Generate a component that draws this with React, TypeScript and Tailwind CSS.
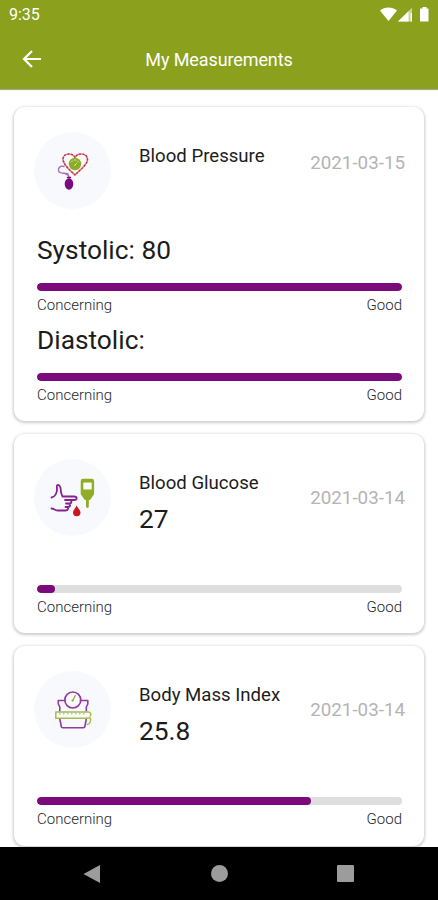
import type { ReactNode } from 'react'

interface MeterProps {
  percent: number
}

interface MeasurementCardProps {
  icon: ReactNode
  title: string
  value?: string
  date: string
  dateClass: string
  className: string
  children: ReactNode
}

function BloodPressureIcon() {
  return (
    <svg className="h-[90px] w-[90px]" viewBox="-2 0 90 90" fill="none" strokeLinecap="round" strokeLinejoin="round">
      <path d="M45 49C40 44 33 39 33 33C33 30 35.500 28 39 28C42 28 44 29.500 45 31.500C46 29.500 48 28 51 28C55 28 57.500 30 57.500 34C57 39 50 44 45 49Z" stroke="#d38a9c" strokeWidth="1.700" />
      <path d="M45 49C40 44 33 39 33 33C33 30 35.500 28 39 28C42 28 44 29.500 45 31.500C46 29.500 48 28 51 28C55 28 57.500 30 57.500 34C57 39 50 44 45 49Z" stroke="#cf3038" strokeWidth="1.300" strokeDasharray="1 2.500" />
      <circle cx="45" cy="38" r="6.200" fill="#8aad24" />
      <path d="M41.500 36L42.500 35M44.500 34H45.500M47.500 35L48.500 36M44.500 39.500L46.500 37.500" stroke="#e2ecc0" strokeWidth="1" />
      <path d="M38 48C34 46.500 29 48.500 28.500 44.500C28 41 31 39.500 34 40.500M36 48.300C38.500 48.300 39 49.500 39 52" stroke="#a86bb5" strokeWidth="1.400" />
      <ellipse cx="39" cy="58" rx="4.300" ry="5.800" fill="#7b0a82" />
      <path d="M37.500 51.500H40.500" stroke="#7b0a82" strokeWidth="1.500" />
    </svg>
  )
}

function BloodGlucoseIcon() {
  return (
    <svg className="h-[90px] w-[90px]" viewBox="-2 2 90 90" fill="none" strokeLinecap="round" strokeLinejoin="round">
      <path d="M21.500 46.500C25 46 27 42 27 38.500C27 35.500 26 34 28.500 34C30.500 35 31 38 31 41.500L32.500 45.500H44C47.500 45.500 47.500 49 44 49H35.500M35 49H39.500C42 49 42 52.500 39.500 52.500H36M38 52.500C41 53 40.500 56 38 56H35.500M37 56C39 57 38 59.500 35.500 59.500H27.500C25 59.500 24 57.500 21.500 57.500" stroke="#872391" strokeWidth="1.800" />
      <path d="M51.900 30.200C51.900 29.500 52.400 29 53.100 29H61.700C62.400 29 62.900 29.500 62.900 30.200V42.700L59.400 47.700H55.400L51.900 42.700Z" fill="#92ad25" stroke="#92ad25" strokeWidth="2.400" />
      <rect x="53.300" y="31.500" width="8.400" height="7" rx="0.800" fill="#fbfcf5" />
      <path d="M57.400 47V55.500" stroke="#92ad25" strokeWidth="2.800" />
      <path d="M46.500 54.500C48 57.500 50.500 59 50.500 61.800C50.500 66.500 43 66.500 43 61.800C43 59 45.500 57.500 46.500 54.500Z" fill="#c91620" />
    </svg>
  )
}

function BodyMassIcon() {
  return (
    <svg className="h-[90px] w-[90px]" viewBox="-1.800 0 90 90" fill="none" strokeLinecap="round" strokeLinejoin="round">
      <path d="M35.500 35.500H28.500V39L30 42V46M50.500 35.500H58V39L56.500 42V46M30 54L31.500 61.500C31.500 62.300 32 62.700 33 62.700H53.500C54.500 62.700 55 62.300 55 61.500L56.500 54" stroke="#9339a0" strokeWidth="1.600" />
      <circle cx="43" cy="35" r="8" stroke="#9339a0" strokeWidth="1.600" />
      <path d="M43 35.500L45.500 30.500" stroke="#92ad25" strokeWidth="1.200" />
      <circle cx="42.800" cy="35.500" r="1.100" fill="#92ad25" />
      <path d="M26 47H58.500C61 47 61.500 49 60.500 51M26 47V53.300H56C59 53.300 61 51.500 60.800 55C60.600 57.500 60 59 57.500 59.500" stroke="#a7bc4d" strokeWidth="1.500" />
      <path d="M30 48V49M34 48V49M38 48V49M42 48V49M46 48V49M50 48V49M54 48V49" stroke="#a7bc4d" strokeWidth="1.100" />
    </svg>
  )
}

function Meter({ percent }: MeterProps) {
  return (
    <div className="pl-[23px] pr-[22px]">
      <div className="h-2 overflow-hidden rounded-full bg-[#dedede]">
        <div className="h-full rounded-full bg-[#7b0a7d]" style={{ width: `${percent}%` }} />
      </div>
      <div className="mt-1 flex h-5 items-center justify-between text-[15px] font-light leading-5 text-[#25282c]">
        <span>Concerning</span>
        <span>Good</span>
      </div>
    </div>
  )
}

function MeasurementCard({ icon, title, value, date, dateClass, className, children }: MeasurementCardProps) {
  return (
    <section className={`mx-3.5 shrink-0 rounded-[11px] bg-white pt-[25px] shadow-[0_1px_3px_1px_rgba(0,0,0,0.2)] ${className}`}>
      <div className="flex h-[102px] pl-5 pr-[19px]">
        <div className="flex h-[77px] w-[77px] shrink-0 items-center justify-center rounded-full bg-[#f7f9fd]">
          <div className="-m-2">{icon}</div>
        </div>
        <div className="ml-7 flex-1 whitespace-nowrap text-[#1c1c1c]">
          <h2 className="mt-3 text-[18.6px] leading-6">{title}</h2>
          {value && <p className="mt-2 text-[26.3px] leading-8">{value}</p>}
        </div>
        <time className={`whitespace-nowrap text-[18.8px] leading-6 text-[#b4b4b4] ${dateClass}`}>{date}</time>
      </div>
      {children}
    </section>
  )
}

export default function App() {
  return (
    <div className="flex h-[900px] w-[438px] flex-col overflow-hidden bg-white font-['Roboto',sans-serif]">
      <header className="z-10 h-[89px] shrink-0 bg-[#8ba11e] text-white shadow-[0_1px_1px_rgba(0,0,0,0.35)]">
        <div className="flex h-[29px] items-center justify-between pl-[9px] pr-2">
          <span className="text-[16px]">9:35</span>
          <svg className="h-4 w-[50px]" viewBox="0 0 50 16" fill="white">
            <path d="M0 3.500C4.500-.5 12.500-.5 17 3.500L8.500 14Z" />
            <path d="M18 14.500L32 .8V14.500Z" opacity=".55" />
            <path d="M18 14.500L28.500 4.200V14.500Z" />
            <path d="M30.500 6H32V14.500H30.500Z" />
            <path d="M42.500 0H46.500V1.500H48.500V14.500H40V1.500H42.500Z" />
          </svg>
        </div>
        <div className="flex h-[60px] items-center">
          <svg className="ml-5 h-6 w-6" viewBox="0 0 24 24" fill="none" stroke="white" strokeWidth="2.200">
            <path d="M21 12H4.500M12 4L4 12L12 20" />
          </svg>
          <h1 className="-ml-11 flex-1 text-center text-[18px] tracking-[-0.1px]">My Measurements</h1>
        </div>
      </header>

      <main className="flex h-[758px] shrink-0 flex-col overflow-hidden pt-[18px]">
        <MeasurementCard icon={<BloodPressureIcon />} title="Blood Pressure" date="2021-03-15" dateClass="mt-[19px]" className="h-[314px]">
          <p className="mb-[17px] pl-[23px] text-[26.3px] leading-8 text-[#1c1c1c]">Systolic: 80</p>
          <Meter percent={100} />
          <p className="mb-[17px] mt-[9px] pl-[23px] text-[26.3px] leading-8 text-[#1c1c1c]">Diastolic:</p>
          <Meter percent={100} />
        </MeasurementCard>

        <MeasurementCard icon={<BloodGlucoseIcon />} title="Blood Glucose" value="27" date="2021-03-14" dateClass="mt-[27px]" className="mt-[13px] h-[199px]">
          <div className="h-6" />
          <Meter percent={5} />
        </MeasurementCard>

        <MeasurementCard icon={<BodyMassIcon />} title="Body Mass Index" value="25.8" date="2021-03-14" dateClass="mt-[27px]" className="mt-[13px] h-[200px]">
          <div className="h-6" />
          <Meter percent={75} />
        </MeasurementCard>
      </main>

      <nav className="flex h-[53px] shrink-0 items-center justify-between bg-black pl-[82px] pr-[84px]">
        <svg className="h-[18px] w-[19px]" viewBox="0 0 19 18" fill="#9c9c9c">
          <path d="M1.500 9L18 0V18Z" />
        </svg>
        <div className="h-[17px] w-[17px] rounded-full bg-[#9c9c9c]" />
        <div className="h-[17px] w-[17px] rounded-[1px] bg-[#9c9c9c]" />
      </nav>
    </div>
  )
}
